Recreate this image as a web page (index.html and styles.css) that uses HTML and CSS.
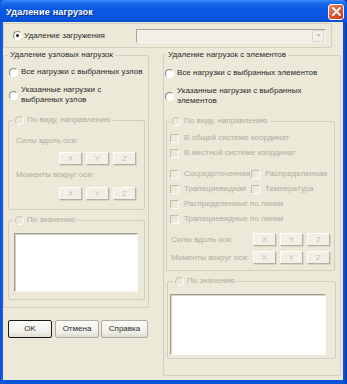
FILE: index.html
```html
<!DOCTYPE html>
<html>
<head>
<meta charset="utf-8">
<link rel="stylesheet" href="styles.css">
</head>
<body>
<div class="window">
  <div class="titlebar">
    <span class="title">Удаление нагрузок</span>
    <span class="close"><svg width="9" height="9" viewBox="0 0 9 9"><path d="M1 1L8 8M8 1L1 8" stroke="#fff" stroke-width="1.8" stroke-linecap="round"/></svg></span>
  </div>
  <div class="client">
    <div class="topbox">
      <span class="radio checked"></span>
      <span class="toplabel">Удаление загружения</span>
      <span class="combo"><span class="combo-btn"><svg width="5" height="3" viewBox="0 0 5 3"><path d="M0 0H5L2.5 3Z" fill="#c8c5b8"/></svg></span></span>
    </div>
    <div class="columns">
      <div class="leftcol">
        <div class="group group-left">
          <div class="legend">Удаление узловых нагрузок</div>
          <div class="opt opt-first"><span class="radio"></span><span>Все нагрузки с выбранных узлов</span></div>
          <div class="opt opt-two"><span class="radio"></span><span>Указанные нагрузки с<br>выбранных узлов</span></div>
          <div class="sub sub-kind-l">
            <div class="legend legend-radio dis"><span class="radio"></span><span>По виду, направлению</span></div>
            <div class="dis axis-label axis-first">Силы вдоль оси:</div>
            <div class="btnrow btnrow-l"><span class="xyz">X</span><span class="xyz">Y</span><span class="xyz">Z</span></div>
            <div class="dis axis-label">Моменты вокруг оси:</div>
            <div class="btnrow btnrow-l btnrow-l2"><span class="xyz">X</span><span class="xyz">Y</span><span class="xyz">Z</span></div>
          </div>
          <div class="sub sub-val-l">
            <div class="legend legend-radio dis"><span class="radio"></span><span>По значению</span></div>
            <div class="memo memo-l"></div>
          </div>
        </div>
        <div class="buttons">
          <span class="btn btn-ok">OK</span>
          <span class="btn btn-cancel">Отмена</span>
          <span class="btn btn-help">Справка</span>
        </div>
      </div>
      <div class="group group-right">
        <div class="legend legend-r">Удаление нагрузок с элементов</div>
        <div class="opt opt-first opt-r"><span class="radio"></span><span>Все нагрузки с выбранных элементов</span></div>
        <div class="opt opt-two opt-r"><span class="radio"></span><span>Указанные нагрузки с выбранных<br>элементов</span></div>
        <div class="sub sub-kind-r">
          <div class="legend legend-radio dis"><span class="radio"></span><span>По виду, направлению</span></div>
          <div class="chk chk-first dis"><span class="box"></span><span>В общей системе координат</span></div>
          <div class="chk dis"><span class="box"></span><span>В местной системе координат</span></div>
          <div class="chk chk-pair dis"><span class="pair"><span class="box"></span><span>Сосредоточенная</span></span><span class="pair"><span class="box"></span><span>Распределенная</span></span></div>
          <div class="chk dis"><span class="pair"><span class="box"></span><span>Трапециевидная</span></span><span class="pair"><span class="box"></span><span>Температура</span></span></div>
          <div class="chk dis"><span class="box"></span><span>Распределенные по линии</span></div>
          <div class="chk dis"><span class="box"></span><span>Трапециевидные по линии</span></div>
          <div class="axisrow axisrow-first"><span class="dis">Силы вдоль оси:</span><span class="btnrow"><span class="xyz">X</span><span class="xyz">Y</span><span class="xyz">Z</span></span></div>
          <div class="axisrow"><span class="dis">Моменты вокруг оси:</span><span class="btnrow"><span class="xyz">X</span><span class="xyz">Y</span><span class="xyz">Z</span></span></div>
        </div>
        <div class="sub sub-val-r">
          <div class="legend legend-radio legend-val-r dis"><span class="radio"></span><span>По значению</span></div>
          <div class="memo memo-r"></div>
        </div>
      </div>
    </div>
  </div>
</div>
</body>
</html>
```
FILE: styles.css
```css
html, body {
  margin: 0;
  padding: 0;
}
body {
  width: 347px;
  height: 384px;
  overflow: hidden;
  font-family: "Liberation Sans", Arial, sans-serif;
  font-size: 8px;
  line-height: 10px;
  color: #2a2a2a;
}
.window {
  width: 347px;
  height: 384px;
  background: linear-gradient(90deg, #0846c8 0, #1f66e8 2px, #0a52d8 3px, #0a52d8 343px, #0a4ed0 345px, #0638b0 347px);
  display: flex;
  flex-direction: column;
}
.titlebar {
  height: 22px;
  flex: none;
  display: flex;
  align-items: center;
  justify-content: space-between;
  padding: 0 3px 0 6px;
  background: linear-gradient(180deg, #3a8cf8 0, #1e6aec 3px, #0a5ae4 8px, #0a56e0 16px, #0a4fd4 22px);
  border-radius: 5px 5px 0 0;
}
.title {
  color: #fff;
  font-weight: bold;
  font-size: 9px;
  letter-spacing: 0.2px;
  text-shadow: 1px 1px 0 #0a2f8c;
  margin-top: 1px;
}
.close {
  width: 14px;
  height: 14px;
  margin-top: 1px;
  border: 1px solid #fff;
  border-radius: 3px;
  background: linear-gradient(135deg, #f08a64 0, #e05a34 45%, #c83a14 100%);
  display: flex;
  align-items: center;
  justify-content: center;
}
.client {
  flex: 1;
  margin: 0 4px 4px 3px;
  background: #ece9d8;
  padding-top: 1px;
}
.topbox {
  width: 327px;
  height: 23px;
  border: 1px solid #d0d0bf;
  border-radius: 2px;
  display: flex;
  align-items: center;
}
.topbox .radio {
  margin-left: 9px;
}
.toplabel {
  margin-left: 2px;
}
.combo {
  margin-left: auto;
  margin-right: 5px;
  width: 187px;
  height: 12px;
  border: 1px solid #b8b5a8;
  border-color: #a8a598 #f4f3ee #f4f3ee #a8a598;
  background: #f1efe6;
  display: flex;
  justify-content: flex-end;
  align-items: center;
  padding-right: 1px;
}
.combo-btn {
  width: 10px;
  height: 10px;
  border: 1px solid #d8d6cc;
  background: #f2f1ea;
  display: flex;
  align-items: center;
  justify-content: center;
}
.radio {
  flex: none;
  display: inline-block;
  width: 7px;
  height: 7px;
  border: 1px solid;
  border-color: #8a8778 #ffffff #ffffff #8a8778;
  border-radius: 50%;
  background: #fff;
  box-sizing: content-box;
  position: relative;
}
.radio.checked::after {
  content: "";
  position: absolute;
  left: 2px;
  top: 2px;
  width: 3px;
  height: 3px;
  border-radius: 50%;
  background: #1a1a1a;
}
.dis .radio {
  background: #ece9d8;
  border-color: #c8c5b8 #fff #fff #c8c5b8;
}
.dis {
  color: #b0ad9e;
}
.columns {
  display: flex;
  gap: 14px;
  margin-top: 1px;
}
.leftcol {
  width: 146px;
  display: flex;
  flex-direction: column;
}
.group {
  border: 1px solid #d0d0bf;
  border-radius: 2px;
  margin-top: 6px;
}
.group-left {
  width: 144px;
  padding-bottom: 7px;
}
.group-right {
  width: 176px;
  height: 319px;
}
.legend {
  display: table;
  margin: -7px 0 0 4px;
  padding: 0 2px;
  height: 12px;
  line-height: 12px;
  background: #ece9d8;
}
.legend-r {
  margin-left: 2px;
}
.legend-radio {
  display: flex;
  width: max-content;
  align-items: center;
  gap: 3px;
}
.opt {
  display: flex;
  align-items: center;
  gap: 3px;
  padding-left: 5px;
}
.opt-first {
  margin-top: 6px;
}
.opt-two {
  margin-top: 8px;
}
.opt-r {
  padding-left: 1px;
}
.opt-r.opt-first {
  margin-top: 7px;
}
.sub {
  border: 1px solid #d0d0bf;
  border-radius: 2px;
}
.sub-kind-l {
  margin: 15px 3px 0 4px;
  padding-bottom: 9px;
}
.sub-kind-l .legend {
  margin-left: 4px;
}
.axis-label {
  padding-left: 7px;
  margin-top: 5px;
}
.axis-first {
  margin-top: 10px;
}
.btnrow {
  display: flex;
  gap: 4px;
}
.btnrow-l {
  padding-left: 50px;
  margin-top: 6px;
}
.btnrow-l2 {
  margin-top: 7px;
}
.xyz {
  width: 21px;
  height: 11px;
  line-height: 11px;
  text-align: center;
  color: #c4c1b2;
  background: #f1efe6;
  border: 1px solid;
  border-color: #fcfcf8 #b4b1a2 #b4b1a2 #fcfcf8;
  box-shadow: 1px 1px 0 #d8d5c6;
}
.sub-val-l {
  margin: 10px 3px 0 4px;
  padding-bottom: 7px;
}
.sub-val-l .legend {
  margin-left: 4px;
}
.memo {
  background: #fff;
  border: 1px solid;
  border-color: #a09d90 #f8f8f4 #f8f8f4 #a09d90;
  box-shadow: inset 1px 1px 0 #d6d3c6;
}
.memo-l {
  margin: 7px 0 0 5px;
  width: 122px;
  height: 57px;
}
.buttons {
  display: flex;
  margin-top: 12px;
  margin-left: 5px;
}
.btn {
  text-align: center;
  background: linear-gradient(#fbfbf8, #f0efe8 70%, #dedbcf);
  border: 1px solid #8a8778;
  border-radius: 2px;
  box-sizing: border-box;
  height: 18px;
  line-height: 16px;
}
.btn-ok {
  width: 44px;
  border-color: #1a1a1a;
}
.btn-cancel {
  width: 44px;
  margin-left: 3px;
  border-color: #b0ad9e;
}
.btn-help {
  width: 47px;
  margin-left: 2px;
  border-color: #b0ad9e;
}
.sub-kind-r {
  margin: 15px 5px 0 2px;
  padding-bottom: 6px;
}
.sub-kind-r > .legend {
  margin-left: 3px;
}
.chk {
  display: flex;
  align-items: center;
  height: 10px;
  margin-top: 5px;
  padding-left: 3px;
}
.chk-first {
  margin-top: 6px;
}
.chk-pair {
  margin-top: 11px;
}
.pair {
  display: flex;
  align-items: center;
  width: 81px;
}
.box {
  flex: none;
  width: 7px;
  height: 7px;
  border: 1px solid;
  border-color: #c0bdb0 #fcfcf8 #fcfcf8 #c0bdb0;
  background: #ece9d8;
  margin-right: 5px;
}
.axisrow {
  display: flex;
  align-items: center;
  justify-content: space-between;
  padding: 0 4px 0 4px;
  margin-top: 5px;
}
.axisrow-first {
  margin-top: 9px;
}
.sub-val-r {
  margin: 10px 4px 0 3px;
  padding-bottom: 3px;
}
.legend-val-r {
  margin-left: 5px;
}
.memo-r {
  margin: 7px 0 0 2px;
  width: 154px;
  height: 59px;
}
```
